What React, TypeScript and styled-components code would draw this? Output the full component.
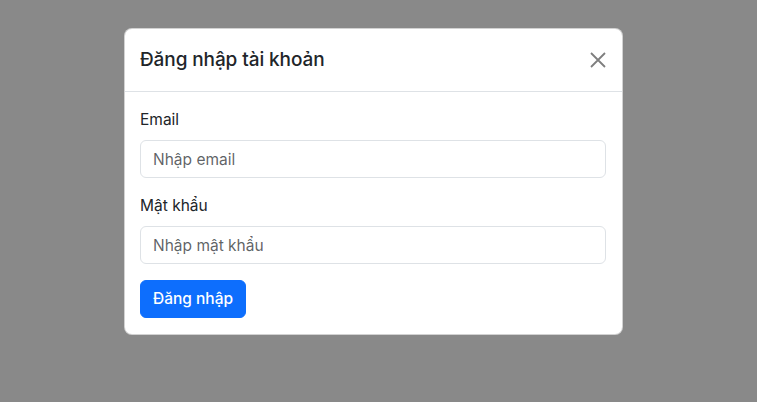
import React from "react";
import styled, { createGlobalStyle } from "styled-components";

const GlobalStyle = createGlobalStyle`
  * {
    box-sizing: border-box;
  }
  body {
    margin: 0;
    background: #898989;
    font-family: Inter, "Noto Sans", sans-serif;
    color: #212529;
  }
`;

const Backdrop = styled.div`
  width: 757px;
  height: 402px;
  background: #898989;
  padding-top: 28px;
  padding-left: 124px;
`;

const Dialog = styled.div`
  width: 499px;
  background: #fff;
  border: 1px solid rgba(0, 0, 0, 0.175);
  border-radius: 8px;
  display: flex;
  flex-direction: column;
`;

const Header = styled.div`
  display: flex;
  align-items: center;
  justify-content: space-between;
  padding: 16px 16px 16px 15px;
  border-bottom: 1px solid #dee2e6;
`;

const Title = styled.h5`
  margin: 0;
  font-size: 19px;
  font-weight: 500;
  line-height: 30px;
  letter-spacing: -0.1px;
`;

const CloseButton = styled.button`
  width: 24px;
  height: 24px;
  margin-right: -4px;
  padding: 4px;
  border: 0;
  background: transparent;
  opacity: 0.5;
  display: flex;
  align-items: center;
  justify-content: center;
  cursor: pointer;
`;

const Body = styled.form`
  padding: 16px 16px 16px 15px;
  display: flex;
  flex-direction: column;
`;

const Field = styled.div`
  margin-bottom: 16px;
  display: flex;
  flex-direction: column;
`;

const Label = styled.label`
  font-size: 15.5px;
  line-height: 24px;
  margin-bottom: 8px;
`;

const Input = styled.input`
  height: 38px;
  padding: 6px 12px;
  font-family: inherit;
  font-size: 15.5px;
  line-height: 24px;
  color: #212529;
  border: 1px solid #dee2e6;
  border-radius: 6px;
  outline: none;

  &::placeholder {
    color: rgba(33, 37, 41, 0.72);
  }
`;

const SubmitButton = styled.button`
  align-self: flex-start;
  height: 38px;
  padding: 6px 12px;
  font-family: inherit;
  font-size: 15.5px;
  font-weight: 500;
  line-height: 24px;
  color: #fff;
  background: #0d6efd;
  border: 1px solid #0d6efd;
  border-radius: 6px;
  cursor: pointer;
`;

export default function App() {
  return (
    <>
      <GlobalStyle />
      <Backdrop>
        <Dialog>
          <Header>
            <Title>Đăng nhập tài khoản</Title>
            <CloseButton type="button" aria-label="Close">
              <svg width="16" height="16" viewBox="0 0 16 16" fill="none">
                <path d="M1 1L15 15M15 1L1 15" stroke="#000" strokeWidth="1.8" />
              </svg>
            </CloseButton>
          </Header>
          <Body onSubmit={(e) => e.preventDefault()}>
            <Field>
              <Label htmlFor="email">Email</Label>
              <Input id="email" type="email" placeholder="Nhập email" />
            </Field>
            <Field>
              <Label htmlFor="password">Mật khẩu</Label>
              <Input id="password" type="password" placeholder="Nhập mật khẩu" />
            </Field>
            <SubmitButton type="submit">Đăng nhập</SubmitButton>
          </Body>
        </Dialog>
      </Backdrop>
    </>
  );
}
